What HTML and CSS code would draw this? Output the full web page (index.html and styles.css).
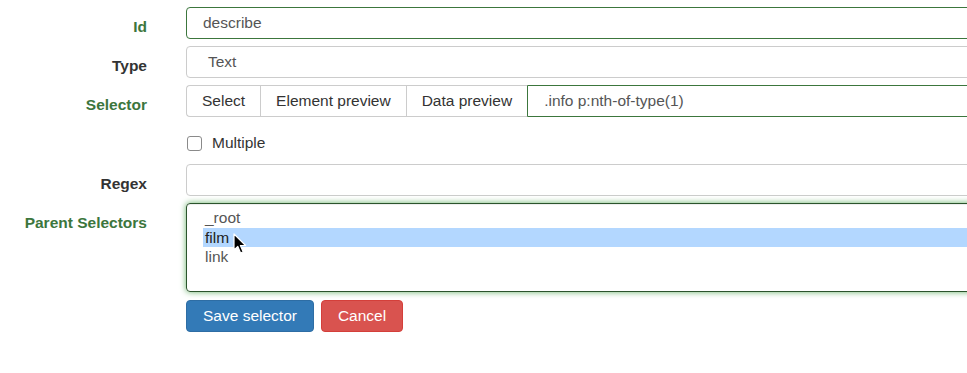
FILE: index.html
```html
<!DOCTYPE html>
<html>
<head>
<meta charset="utf-8">
<link rel="stylesheet" href="styles.css">
</head>
<body>
<form class="form">
  <div class="row success">
    <label class="lbl">Id</label>
    <div class="ctl"><div class="input">describe</div></div>
  </div>
  <div class="row">
    <label class="lbl">Type</label>
    <div class="ctl"><div class="input sel">Text</div></div>
  </div>
  <div class="row success">
    <label class="lbl">Selector</label>
    <div class="ctl group">
      <span class="gbtn">Select</span><span class="gbtn">Element preview</span><span class="gbtn">Data preview</span><div class="input ginput">.info p:nth-of-type(1)</div>
    </div>
  </div>
  <div class="row checkrow">
    <div class="lbl"></div>
    <div class="ctl check"><span class="box"></span><span>Multiple</span></div>
  </div>
  <div class="row">
    <label class="lbl">Regex</label>
    <div class="ctl"><div class="input"></div></div>
  </div>
  <div class="row success">
    <label class="lbl">Parent Selectors</label>
    <div class="ctl">
      <div class="list">
        <div class="opt">_root</div>
        <div class="opt on">film</div>
        <div class="opt">link</div>
        <svg class="cursor" width="15" height="22" viewBox="0 0 15 22"><path d="M1 1 L1 17 L4.8 13.4 L7.6 20 L10.2 18.9 L7.4 12.5 L12.6 12.5 Z" fill="#000" stroke="#fff" stroke-width="1.2" stroke-linejoin="round"/></svg>
      </div>
    </div>
  </div>
  <div class="row">
    <div class="lbl"></div>
    <div class="ctl actions">
      <button type="button" class="btn primary">Save selector</button>
      <button type="button" class="btn danger">Cancel</button>
    </div>
  </div>
</form>
</body>
</html>
```
FILE: styles.css
```css
html, body {
  margin: 0;
  padding: 0;
  background: #fff;
  overflow: hidden;
}
body {
  font-family: "Liberation Sans", Arial, sans-serif;
  font-size: 15.5px;
  color: #333;
}
.form {
  width: 1300px;
  padding-top: 7px;
}
.row {
  display: grid;
  grid-template-columns: 147px 1fr;
  column-gap: 39px;
  margin-bottom: 7px;
}
.lbl {
  text-align: right;
  font-weight: bold;
  line-height: 20px;
  padding-top: 10px;
  color: #333;
}
.success .lbl { color: #3c763d; }
.input {
  box-sizing: border-box;
  height: 32px;
  border: 1px solid #ccc;
  border-radius: 4px;
  padding: 0 16px;
  line-height: 30px;
  color: #555;
  background: #fff;
}
.success .input { border-color: #3c763d; }
.sel { padding-left: 21px; }
.group { display: flex; }
.gbtn {
  box-sizing: border-box;
  height: 32px;
  line-height: 30px;
  padding: 0 15px;
  border: 1px solid #ccc;
  border-right: none;
  background: #fff;
  color: #333;
  white-space: nowrap;
}
.gbtn:first-child { border-radius: 4px 0 0 4px; }
.ginput {
  flex: 1;
  border-radius: 0 4px 4px 0;
  padding-left: 16px;
}
.checkrow { height: 33px; }
.check {
  display: flex;
  align-items: center;
  gap: 10px;
  padding-top: 5px;
  color: #333;
}
.box {
  box-sizing: border-box;
  width: 15px;
  height: 15px;
  border: 1px solid #8a8a8a;
  border-radius: 3px;
  margin-left: 1px;
  background: #fff;
}
.list {
  position: relative;
  box-sizing: border-box;
  height: 89px;
  border: 1px solid #2b542c;
  border-radius: 4px;
  padding: 4px 0 0 16px;
  box-shadow: inset 0 1px 1px rgba(0,0,0,.075), 0 0 6px #67b168;
  color: #555;
}
.opt {
  line-height: 19.5px;
  padding-left: 2px;
}
.opt.on {
  background: #b3d7ff;
  color: #222;
}
.cursor {
  position: absolute;
  left: 46px;
  top: 29px;
}
.actions {
  display: flex;
  gap: 7px;
  padding-top: 1px;
}
.btn {
  font-family: inherit;
  font-size: 15.5px;
  height: 32px;
  padding: 0 16px;
  border-radius: 4px;
  border: 1px solid;
  color: #fff;
  line-height: 30px;
}
.primary { background: #337ab7; border-color: #2e6da4; }
.danger { background: #d9534f; border-color: #d43f3a; }
```
